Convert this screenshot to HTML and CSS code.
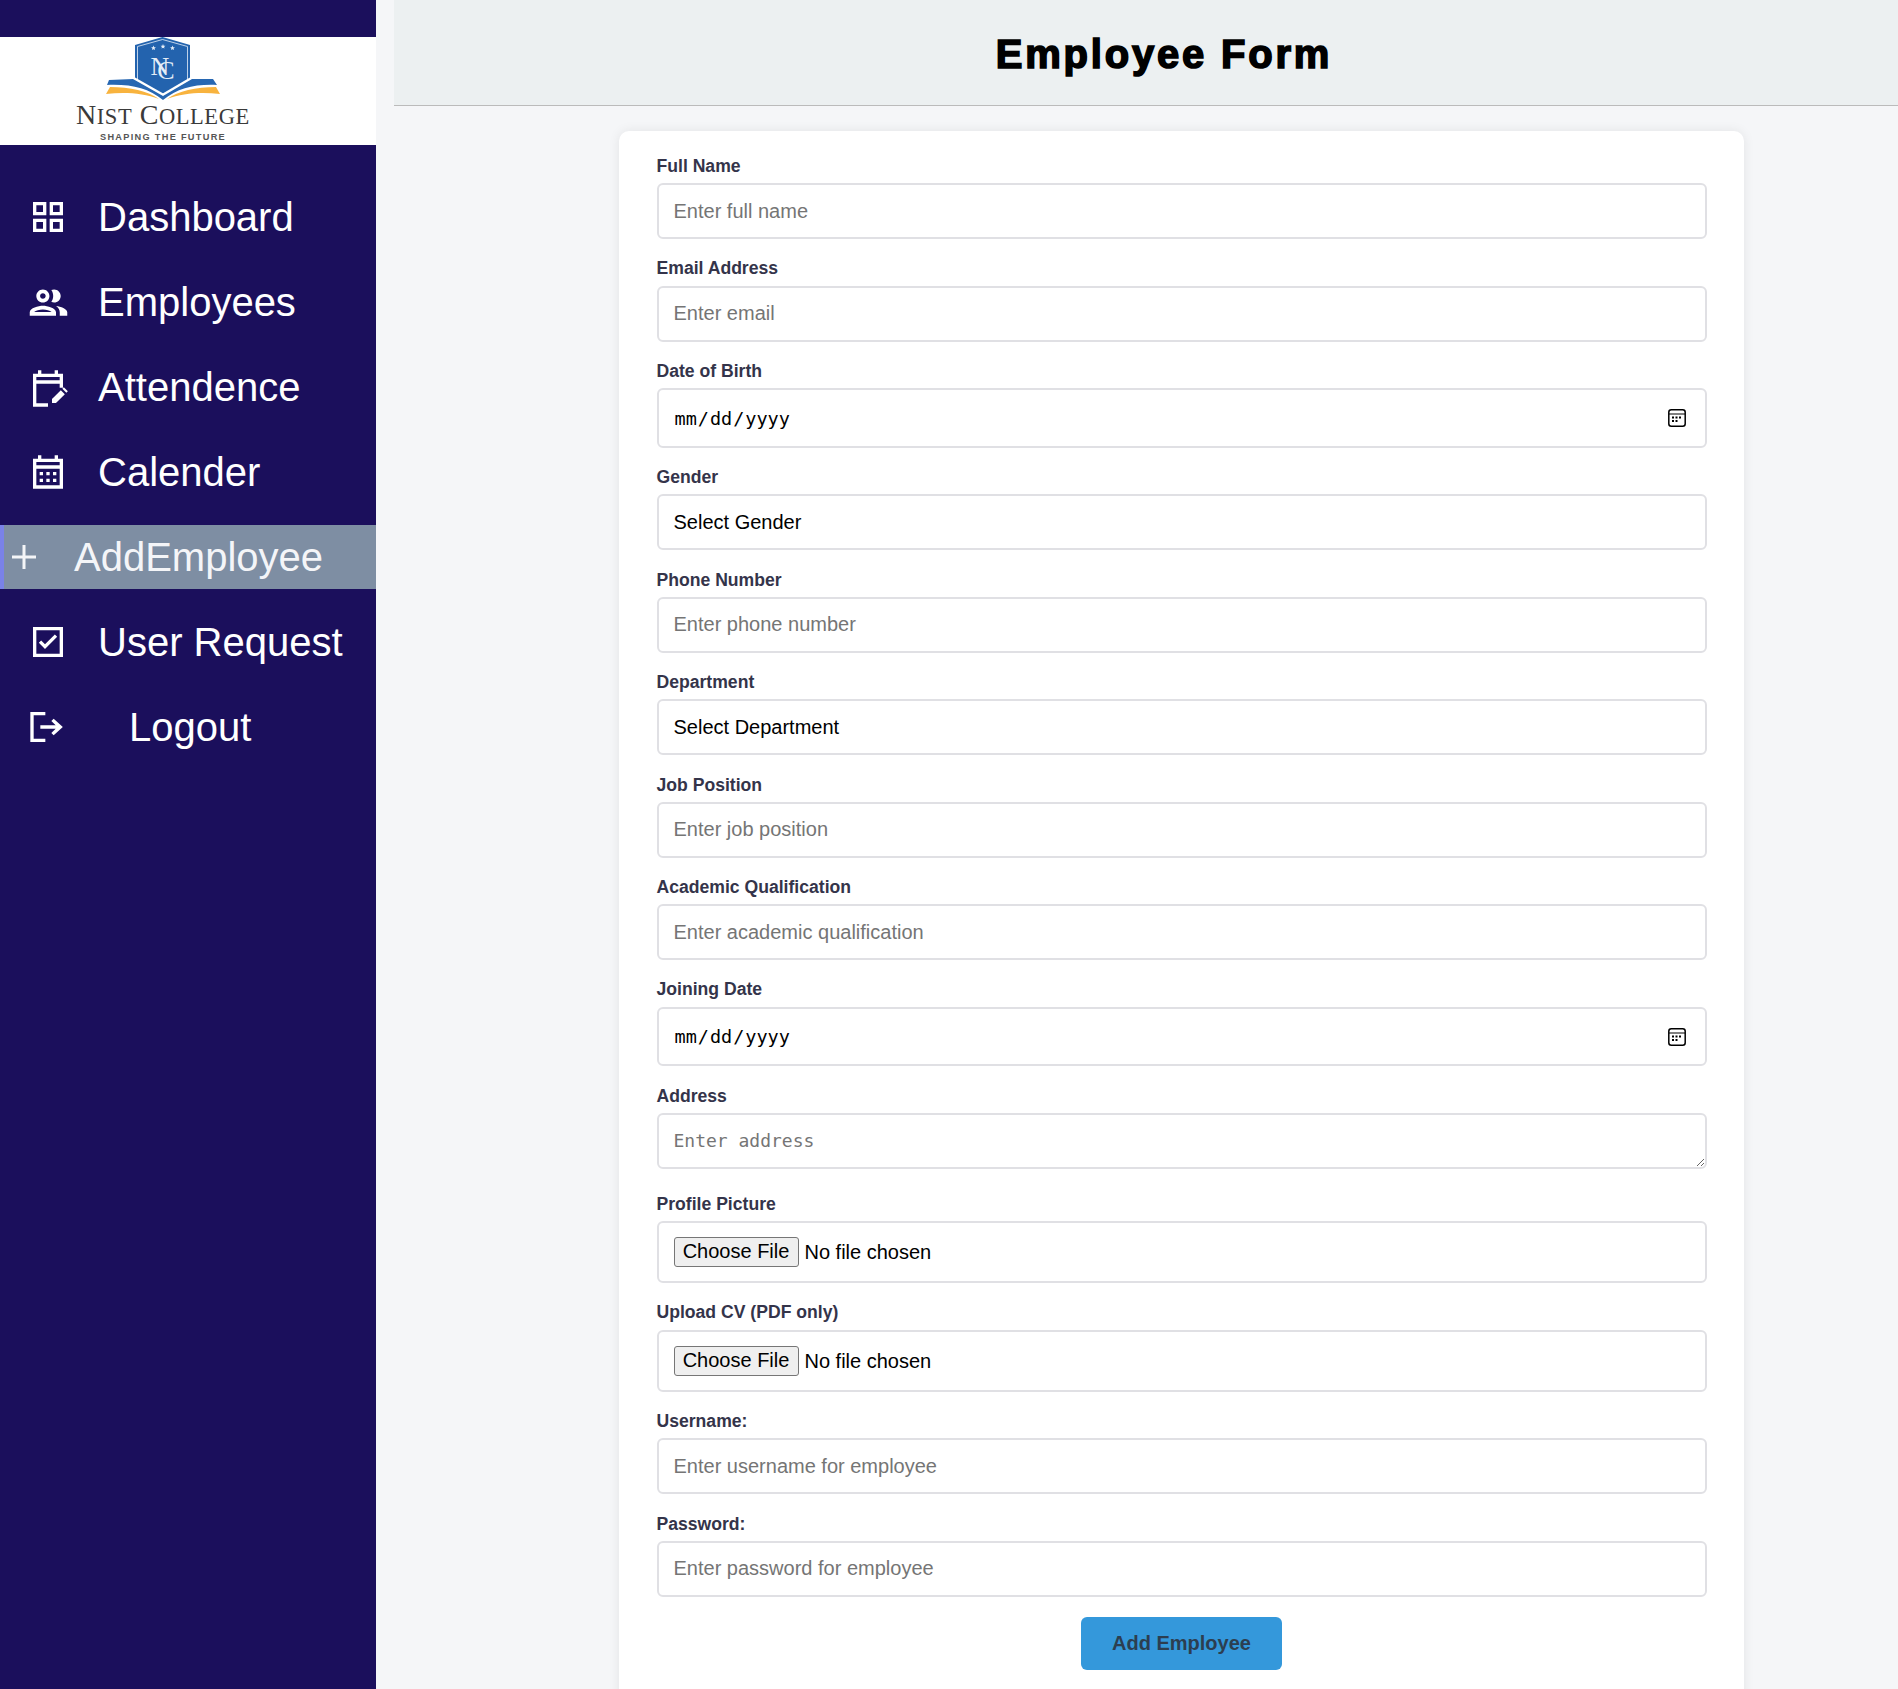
FILE: index.html
```html
<!DOCTYPE html>
<html lang="en">
<head>
<meta charset="utf-8">
<title>Employee Form</title>
<link rel="stylesheet" href="styles.css">
</head>
<body>
<div class="app">
  <aside class="sidebar">
    <div class="logo">
      <svg class="logo-art" viewBox="0 0 376 108" width="376" height="108" aria-label="Nist College">
        <path d="M135 8 162.500 0 190 8V44L162.500 60 135 44Z" fill="#2363ae"/>
        <path d="M137.500 9.500 162.500 2.500 187.500 9.500V44" fill="none" stroke="#e4edf7" stroke-width=".8"/>
        <path d="M137.500 9.500V44" fill="none" stroke="#e4edf7" stroke-width=".8"/>
        <path d="M153.500 8.600l.7 1.600 1.700.1-1.300 1.100.4 1.700-1.500-.9-1.500.9.4-1.700-1.300-1.100 1.700-.1zM163 7.100l.7 1.600 1.700.1-1.300 1.100.4 1.700-1.500-.9-1.500.9.4-1.700-1.300-1.100 1.700-.1zM172.500 8.600l.7 1.600 1.700.1-1.300 1.100.4 1.700-1.500-.9-1.500.9.4-1.700-1.300-1.100 1.700-.1z" fill="#e4edf7"/>
        <text class="logo-mono" x="150.500 157.300" y="38 42">NC</text>
        <path d="M133 41 163 58 192 41" fill="none" stroke="#fff" stroke-width="3"/>
        <path d="M109 43 133 42 163 59 192 42 213 42 217 48C195 47 178 51 163 63 148 51 131 47 107 48Z" fill="#2767b2"/>
        <path d="M106 57 110 50C130 50 148 54 159 62 143 56 125 55 106 57Z" fill="#f8b33e"/>
        <path d="M220 57 216 50C196 50 178 54 167 62 183 56 201 55 220 57Z" fill="#f8b33e"/>
        <text class="logo-name" x="76" y="87">N<tspan class="logo-small">IST</tspan> C<tspan class="logo-small">OLLEGE</tspan></text>
        <text class="logo-tag" x="100" y="103">SHAPING THE FUTURE</text>
      </svg>
    </div>
    <nav class="nav">
      <a class="nav-item">
        <svg class="icon" viewBox="0 0 24 24"><path d="M3 3v8h8V3H3zm6 6H5V5h4v4zm-6 4v8h8v-8H3zm6 6H5v-4h4v4zm4-16v8h8V3h-8zm6 6h-4V5h4v4zm-6 4v8h8v-8h-8zm6 6h-4v-4h4v4z"/></svg>
        <span>Dashboard</span>
      </a>
      <a class="nav-item">
        <svg class="icon icon-group" viewBox="0 0 24 24"><path d="M9 13.750c-2.340 0-7 1.170-7 3.500V19h14v-1.750c0-2.330-4.660-3.500-7-3.500zM4.340 17c.84-.58 2.870-1.250 4.660-1.250s3.820.67 4.660 1.250H4.340zM9 12c1.930 0 3.500-1.570 3.500-3.500S10.930 5 9 5 5.500 6.570 5.500 8.500 7.070 12 9 12zm0-5c.83 0 1.500.67 1.500 1.500S9.830 10 9 10s-1.500-.67-1.500-1.500S8.170 7 9 7zm7.040 6.810c1.160.84 1.960 1.960 1.960 3.440V19h4v-1.750c0-2.020-3.500-3.170-5.960-3.440zM15 12c1.930 0 3.500-1.570 3.500-3.500S16.930 5 15 5c-.54 0-1.040.13-1.500.35.630.89 1 1.980 1 3.150s-.37 2.260-1 3.150c.46.22.96.35 1.500.35z"/></svg>
        <span>Employees</span>
      </a>
      <a class="nav-item">
        <svg class="icon" viewBox="0 0 24 24"><path d="M5 10h14v2.500h2V4h-3V2h-2v2H8V2H6v2H3v19.800h9v-2H5V10zm0-4h14v2H5V6zM14.400 21.600v-2.400l5.300-5.300 2.400 2.400-5.300 5.300zM20.600 13l.9-.9 2.400 2.400-.9.9z"/></svg>
        <span>Attendence</span>
      </a>
      <a class="nav-item">
        <svg class="icon" viewBox="0 0 24 24"><path d="M21 4h-3V2h-2v2H8V2H6v2H3v18h18V4zM5 20V10h14v10H5zM19 8H5V6h14v2zM7 12h2v2H7zm4 0h2v2h-2zm4 0h2v2h-2zm-8 4h2v2H7zm4 0h2v2h-2zm4 0h2v2h-2z"/></svg>
        <span>Calender</span>
      </a>
      <a class="nav-item nav-active">
        <svg class="icon icon-plus" viewBox="0 0 24 24"><path d="M10.500 0h3v10.500H24v3H13.500V24h-3V13.500H0v-3h10.500z"/></svg>
        <span>AddEmployee</span>
      </a>
      <a class="nav-item">
        <svg class="icon" viewBox="0 0 24 24"><path d="M3 3h18v18H3V3zm2 2v14h14V5H5zm5.200 11.200L6.500 12.500l1.400-1.400 2.300 2.300 5.900-5.900 1.400 1.400z"/></svg>
        <span>User Request</span>
      </a>
      <a class="nav-item nav-logout">
        <svg class="icon" viewBox="0 0 24 24"><path d="M2 3h9v2H4v14h7v2H2zM16 7l5.500 5-5.500 5-1.400-1.400 2.600-2.600H8v-2h9.200l-2.600-2.600z"/></svg>
        <span>Logout</span>
      </a>
    </nav>
  </aside>
  <main class="main">
    <header class="page-header"><h1 class="page-title">Employee Form</h1></header>
    <form class="card">
      <div class="field"><label class="field-label">Full Name</label><input class="control" type="text" placeholder="Enter full name"></div>
      <div class="field"><label class="field-label">Email Address</label><input class="control" type="email" placeholder="Enter email"></div>
      <div class="field"><label class="field-label">Date of Birth</label><input class="control control-date" type="date"></div>
      <div class="field"><label class="field-label">Gender</label><select class="control control-select"><option>Select Gender</option></select></div>
      <div class="field"><label class="field-label">Phone Number</label><input class="control" type="tel" placeholder="Enter phone number"></div>
      <div class="field"><label class="field-label">Department</label><select class="control control-select"><option>Select Department</option></select></div>
      <div class="field"><label class="field-label">Job Position</label><input class="control" type="text" placeholder="Enter job position"></div>
      <div class="field"><label class="field-label">Academic Qualification</label><input class="control" type="text" placeholder="Enter academic qualification"></div>
      <div class="field"><label class="field-label">Joining Date</label><input class="control control-date" type="date"></div>
      <div class="field field-area"><label class="field-label">Address</label><textarea class="control control-area" rows="1" placeholder="Enter address"></textarea></div>
      <div class="field"><label class="field-label">Profile Picture</label><input class="control control-file" type="file"></div>
      <div class="field"><label class="field-label">Upload CV (PDF only)</label><input class="control control-file" type="file"></div>
      <div class="field"><label class="field-label">Username:</label><input class="control" type="text" placeholder="Enter username for employee"></div>
      <div class="field"><label class="field-label">Password:</label><input class="control" type="password" placeholder="Enter password for employee"></div>
      <div class="actions"><button class="submit" type="button">Add Employee</button></div>
    </form>
  </main>
</div>
</body>
</html>
```
FILE: styles.css
```css
* { box-sizing: border-box; }
html, body { margin: 0; height: 100%; overflow: hidden; }
body { font-family: "Liberation Sans", Arial, sans-serif; background: #f5f6f8; }

.app { display: flex; height: 1689px; overflow: hidden; }

.sidebar { flex: 0 0 376px; background: #1b0f5c; padding-top: 37px; }
.logo { height: 108px; background: #fff; }
.logo-art { display: block; }
.logo-mono { font: 26px "Liberation Serif", serif; fill: #e4edf7; }
.logo-name { font: 28px "Liberation Serif", serif; fill: #3a3a3a; letter-spacing: .55px; }
.logo-small { font-size: 22.500px; }
.logo-tag { font: bold 9.200px "Liberation Sans", sans-serif; fill: #555; letter-spacing: 1.300px; }

.nav { display: flex; flex-direction: column; gap: 21px; margin-top: 40px; }
.nav-item { display: flex; align-items: center; height: 64px; padding-left: 28px; gap: 30px; color: #fff; font-size: 40px; }
.icon { flex: 0 0 40px; width: 40px; height: 40px; fill: #fff; }
.icon-group { flex-basis: 45px; width: 45px; height: 45px; margin: 0 -2.500px; }
.nav-active { background: #7e8ea3; border-left: 4px solid #7a82e8; padding-left: 8px; gap: 38px; color: #f4f5f8; }
.icon-plus { flex-basis: 24px; width: 24px; height: 24px; fill: #f4f5f8; }
.nav-logout { gap: 62px; }
.nav-logout .icon { margin-left: -1px; }

.main { flex: 1; margin-left: 18px; min-width: 0; }
.page-header { height: 106px; background: #ecf0f1; border-bottom: 1px solid #bbb; padding: 4px 0 0 36px; display: flex; align-items: center; justify-content: center; }
.page-title { margin: 0; font-size: 40px; font-weight: bold; color: #000; letter-spacing: 2.800px; -webkit-text-stroke: 1.600px #000; }

.card { width: 1125px; margin: 25px 0 0 225px; padding: 25px 37.500px 38px; background: #fff; border-radius: 10px; box-shadow: 0 0 12px rgba(0, 0, 0, .08); }
.field { margin-bottom: 19.200px; }
.field-area { margin-bottom: 24.700px; }
.field-label { display: block; margin-bottom: 7.300px; font-size: 17.600px; line-height: 20px; font-weight: bold; color: #34344a; }
.control { display: block; width: 100%; height: 56px; padding: 0 15px; border: 2px solid #e0e0e4; border-radius: 6px; background: #fff; color: #000; font: 20px "Liberation Sans", Arial, sans-serif; }
.control::placeholder { color: #757575; }
.control-date { height: 59.600px; font-family: "DejaVu Sans Mono", monospace; font-size: 18.500px; }
.control-date::-webkit-calendar-picker-indicator {
  width: 18px;
  height: 18px;
  margin-right: 3.500px;
  padding: 0;
  background: url("data:image/svg+xml,%3Csvg xmlns='http://www.w3.org/2000/svg' viewBox='0 0 18 18'%3E%3Crect x='.8' y='.8' width='16.400' height='16.400' rx='2.500' fill='none' stroke='%23000' stroke-width='1.500'/%3E%3Cpath d='M1 5h16' stroke='%23000' stroke-width='1.200'/%3E%3Cpath d='M4 7.500h2v2H4zM7.500 7.500h2v2h-2zM11 7.500h2v2h-2zM4 11h2v2H4zM7.500 11h2v2h-2z' fill='%23000'/%3E%3C/svg%3E") center / 18px 18px no-repeat;
}
.control-select { appearance: none; -webkit-appearance: none; }
.control-area { padding-top: 15px; font-family: "DejaVu Sans Mono", monospace; font-size: 18px; line-height: 21px; resize: vertical; }
.control-file { height: 62.300px; padding-top: 14px; }
.control-file::file-selector-button { width: 125px; height: 30px; margin-right: 6px; padding: 0; border: 1px solid #767676; border-radius: 3px; background: #efefef; color: #000; font: 20px "Liberation Sans", Arial, sans-serif; }

.actions { display: flex; justify-content: center; padding-top: 1px; }
.submit { width: 201px; height: 53px; border: 0; border-radius: 6px; background: #3498db; color: #2c3e50; font: bold 20px "Liberation Sans", Arial, sans-serif; }
```
